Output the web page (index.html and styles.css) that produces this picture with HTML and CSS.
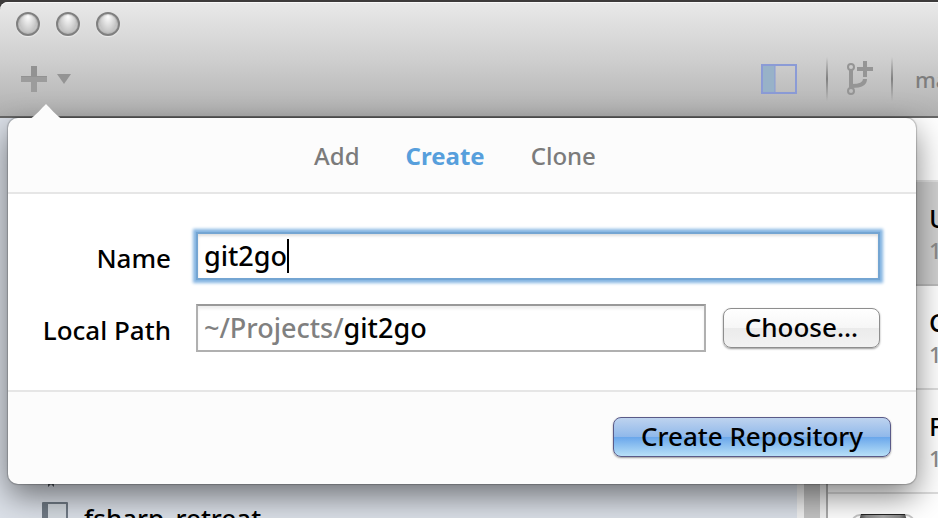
FILE: index.html
```
<!DOCTYPE html>
<html lang="en">

<head>
  <meta charset="UTF-8" />
  <meta name="viewport" content="width=device-width, initial-scale=1.0" />
  <title>Create Repository</title>
  <link rel="stylesheet" href="styles.css">
</head>

<body>
  <div class="window">
    <header class="toolbar">
      <div class="lights">
        <button class="light" type="button" aria-label="Close"></button>
        <button class="light" type="button" aria-label="Minimize"></button>
        <button class="light" type="button" aria-label="Zoom"></button>
      </div>
      <div class="tools">
        <button class="tool add" type="button" aria-label="Add repository">
          <svg width="26" height="26" viewBox="0 0 26 26">
            <path d="M10 0h6v10h10v6H16v10h-6V16H0v-6h10z" fill="#9c9c9c" />
            <path d="M0 10h10V0h6v10h10v1H0z" fill="#929292" />
          </svg>
          <svg width="14" height="10" viewBox="0 0 14 10">
            <path d="M0 0h14L7 10z" fill="#949494" />
          </svg>
        </button>
        <div class="tools-right">
          <button class="tool" type="button" aria-label="Toggle sidebar">
            <svg width="36" height="30" viewBox="0 0 36 30">
              <path d="M2 2h12v26H2z" fill="#98b2c8" />
              <path d="M1 1h34v28H1z" fill="none" stroke="#8b9bd6" stroke-width="2" />
              <path d="M14 2v26" stroke="#8b9bd6" />
            </svg>
          </button>
          <span class="separator"></span>
          <button class="tool" type="button" aria-label="New branch">
            <svg width="28" height="36" viewBox="0 0 28 36" fill="none" stroke="#959595">
              <circle cx="5" cy="6" r="3" stroke-width="2" />
              <circle cx="5" cy="30" r="3" stroke-width="2" />
              <path d="M5 9v18" stroke-width="4" />
              <path d="M6 25c7 0 13-1 13-7" stroke-width="4" />
              <path d="M19 0v16M11 8h16" stroke-width="4" />
            </svg>
          </button>
          <span class="separator"></span>
          <span class="branch">master</span>
        </div>
      </div>
    </header>

    <main class="content">
      <aside class="sidebar">
        <div class="repo">
          <svg width="26" height="34" viewBox="0 0 26 34">
            <path d="M1 1h24v27H1z" fill="#d4dae0" stroke="#707a85" stroke-width="2" />
            <path d="M6 26h6v8l-3-3-3 3z" fill="#4b525b" />
          </svg>
        </div>
        <div class="repo">
          <svg width="26" height="34" viewBox="0 0 26 34">
            <path d="M1 2h24v27H1z" fill="#d4dae0" stroke="#707a85" stroke-width="2" stroke-linejoin="round" />
            <path d="M1 2h5v27H1z" fill="#707a85" />
            <path d="M6 26h6v8l-3-3-3 3z" fill="#4b525b" />
          </svg>
          <span>fsharp_retreat</span>
        </div>
      </aside>
      <div class="scroller"></div>
      <section class="commits">
        <div class="commits-head"></div>
        <article class="commit selected">
          <h2>Update</h2>
          <p>12 days ago</p>
        </article>
        <article class="commit">
          <h2>Create</h2>
          <p>13 days ago</p>
        </article>
        <article class="commit">
          <h2>Fix</h2>
          <p>13 days ago</p>
        </article>
        <article class="commit">
          <svg class="avatar" width="64" height="64" viewBox="0 0 64 64">
            <defs>
              <linearGradient id="hair">
                <stop offset="0" stop-color="#222" />
                <stop offset=".2" stop-color="#888" />
                <stop offset=".5" stop-color="#aaa" />
                <stop offset=".8" stop-color="#888" />
                <stop offset="1" stop-color="#222" />
              </linearGradient>
            </defs>
            <rect x="1" y="1" width="62" height="62" rx="8" fill="#fff" stroke="#c4c4c4" stroke-width="2" />
            <path d="M10 0h44l6 20H4z" fill="url(#hair)" />
            <path d="M10 0h44" stroke="#222" stroke-width="2" />
          </svg>
        </article>
      </section>
    </main>

    <form class="popover">
      <svg class="arrow" width="32" height="15" viewBox="0 0 32 15">
        <path d="M0 15C5 12 12 4 16 0c4 4 11 12 16 15z" fill="#fcfcfc" />
      </svg>
      <nav class="tabs">
        <button class="tab" type="button">Add</button>
        <button class="tab active" type="button">Create</button>
        <button class="tab" type="button">Clone</button>
      </nav>
      <div class="fields">
        <label for="name">Name</label>
        <div class="field focused">
          <input id="name" type="text" value="git2go" />
          <span class="caret"></span>
        </div>
        <label for="path">Local Path</label>
        <div class="path-row">
          <div class="field">
            <span class="prefix">~/Projects/</span>
            <input id="path" type="text" value="git2go" />
          </div>
          <button class="button" type="button">Choose…</button>
        </div>
      </div>
      <footer class="actions">
        <button class="button primary" type="button">Create Repository</button>
      </footer>
    </form>
  </div>
</body>

</html>
```

FILE: styles.css
```
* {
  box-sizing: border-box;
}

body {
  margin: 0;
  height: 100vh;
  overflow: hidden;
  background-color: #3d3b3b;
  font-family: "Noto Sans", "Open Sans", sans-serif;
  font-size: 26px;
  font-weight: 500;
  line-height: 32px;
  color: #000;
}

button,
input {
  margin: 0;
  padding: 0;
  border: 0;
  background: none;
  font: inherit;
  color: inherit;
}

svg {
  display: block;
  flex: none;
}

.window {
  position: relative;
  display: flex;
  flex-direction: column;
  height: 100%;
  padding-top: 2px;
  overflow: hidden;
}

/* toolbar */
.toolbar {
  padding: 10px 0 15px;
  border-bottom: 2px solid #666;
  border-top-left-radius: 8px;
  background: linear-gradient(#e9e9e9, #cfcfcf 50%, #b1b1b1);
  box-shadow: inset 0 1px 0 #f8f8f8;
}

.lights {
  display: flex;
  gap: 16px;
  padding-left: 16px;
}

.light {
  width: 24px;
  height: 24px;
  border: 2px solid #808080;
  border-radius: 50%;
  background: radial-gradient(ellipse at 50% 10%, #fff, #d6d6d6 45%, #c4c4c4 65%, #eee);
  box-shadow: 0 1px 1px #eee, inset 0 0 2px #888;
}

.tools {
  display: flex;
  align-items: center;
  justify-content: space-between;
  padding: 21px 0 0 21px;
}

.tool {
  display: flex;
  align-items: center;
  gap: 10px;
}

.tools-right {
  display: flex;
  align-items: center;
}

.separator {
  width: 2px;
  height: 44px;
  margin: 0 14px 0 29px;
  background: linear-gradient(transparent, #808080 50%, transparent);
}

.separator + .tool {
  margin: 0 -12px 0 4px;
}

.branch {
  width: 23px;
  margin-left: 8px;
  font-size: 22px;
  white-space: nowrap;
  color: #7d7d7d;
}

/* content behind the popover */
.content {
  display: flex;
  flex: 1;
  min-height: 0;
}

.sidebar {
  flex: 1;
  padding: 328px 0 0 42px;
  background-color: #dce1e9;
  overflow: hidden;
}

.repo {
  display: flex;
  align-items: center;
  gap: 16px;
  height: 48px;
}

.scroller {
  width: 29px;
  border: solid #f0f0f0;
  border-width: 0 6px 0 7px;
  background-color: #c4c4c4;
}

.commits {
  width: 112px;
  border-left: 2px solid #aaa;
  background-color: #fff;
  white-space: nowrap;
  overflow: hidden;
}

.commits-head {
  height: 64px;
  border-bottom: 2px solid #e0e0e0;
}

.commit {
  height: 104px;
  padding: 20px 0 0 101px;
  border-bottom: 2px solid #ddd;
}

.commit.selected {
  background-color: #d0d0d0;
  border-color: #bbb;
}

.commit h2 {
  margin: 0;
  font-size: 26px;
  font-weight: 500;
}

.commit p {
  margin: 0;
  font-size: 22px;
  color: #8c8c8c;
}

.commit:last-child {
  padding-left: 23px;
}

/* popover */
.popover {
  position: absolute;
  top: 118px;
  left: 8px;
  right: 22px;
  border-radius: 10px;
  background-color: #fcfcfc;
  box-shadow: 0 0 1px 1px rgba(0, 0, 0, .2), 0 12px 32px rgba(0, 0, 0, .5);
}

.arrow {
  position: absolute;
  top: -14px;
  left: 22px;
}

.tabs {
  display: flex;
  justify-content: center;
  gap: 46px;
  padding: 22px 14px 20px 0;
  font-size: 24px;
  color: #7b7b7b;
}

.tab.active {
  font-weight: bold;
  color: #579fdc;
}

.fields {
  display: grid;
  grid-template-columns: 163px minmax(0, 1fr);
  gap: 24px 25px;
  align-items: center;
  padding: 38px 36px 38px 0;
  border: solid #e6e6e6;
  border-width: 2px 0;
  background-color: #fff;
}

.fields label {
  padding-top: 4px;
  text-align: right;
}

.field {
  display: flex;
  flex: 1;
  align-items: center;
  min-width: 0;
  height: 48px;
  padding: 0 6px;
  border: 2px solid #b0b0b0;
  border-top-color: #999;
  background-color: #fff;
  box-shadow: inset 0 3px 3px #eee;
  font-size: 27px;
  line-height: 40px;
}

.field input {
  flex: 1;
  min-width: 0;
  height: 40px;
  outline: none;
}

.field.focused {
  border-color: #74a5d2;
  box-shadow: 0 0 3px 3px #85b5e2, inset 0 2px 3px #ddd;
}

.field.focused input {
  flex: none;
  field-sizing: content;
}

.caret {
  width: 2px;
  height: 34px;
  background-color: #000;
}

.prefix {
  color: #808080;
}

.path-row {
  display: flex;
  align-items: center;
  gap: 17px;
}

.button {
  height: 40px;
  padding: 0 21px 2px;
  border: 1px solid #8e8e8e;
  border-radius: 8px;
  background: linear-gradient(#fff, #f6f6f6 50%, #ebebeb 50%, #f2f2f2);
  box-shadow: 0 1px 2px rgba(0, 0, 0, .4);
}

.actions {
  display: flex;
  justify-content: flex-end;
  padding: 25px 25px 27px;
}

.button.primary {
  padding: 0 27px 2px;
  border-color: #5a5a88;
  background: linear-gradient(#bed3ef, #8fb8ea 50%, #69a6eb 50%, #b8e0f7);
}
```
